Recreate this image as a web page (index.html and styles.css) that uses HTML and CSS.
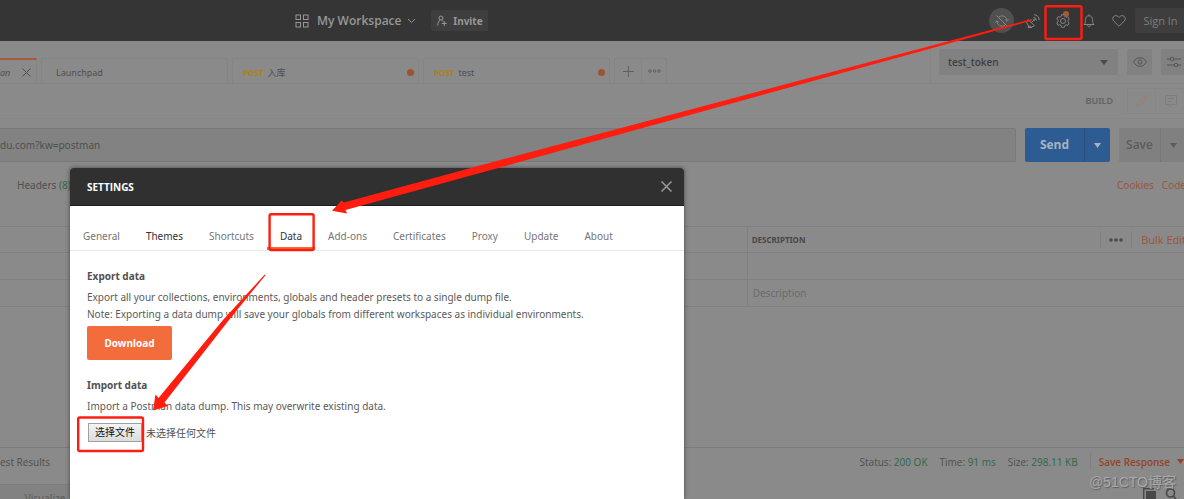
FILE: index.html
```html
<!DOCTYPE html>
<html lang="en">
<head>
<meta charset="utf-8">
<meta name="viewport" content="width=device-width, initial-scale=1">
<title>Settings</title>
<link rel="stylesheet" href="styles.css">
</head>
<body>
<div class="app">
  <header class="topbar">
    <button class="workspace" type="button">
      <svg width="14" height="14" viewBox="0 0 14 14" fill="none" stroke="currentColor"><rect x="1" y="1" width="4.5" height="4.5"/><rect x="8.5" y="1" width="4.5" height="4.5"/><rect x="1" y="8.5" width="4.5" height="4.5"/><rect x="8.5" y="8.5" width="4.5" height="4.5"/></svg>
      <span>My Workspace</span>
      <svg width="9" height="6" viewBox="0 0 9 6" fill="none" stroke="currentColor"><path d="M1 1l3.5 3.5L8 1"/></svg>
    </button>
    <button class="invite" type="button">
      <svg width="10" height="12" viewBox="0 0 10 12" fill="none" stroke="currentColor"><circle cx="4" cy="3" r="2"/><path d="M3.2 5C1.600 6 .8 8 .8 10.500M5 5.200l1 1.300M7.200 6v5M4.700 8.500h5"/></svg>
      <span>Invite</span>
    </button>
    <div class="top-actions">
      <button class="sync" type="button" aria-label="Sync off">
        <svg width="14" height="14" viewBox="0 0 14 14" fill="none" stroke="currentColor"><path d="M4 2.800A5 5 0 0 1 12 7M10 11.200A5 5 0 0 1 2 7M1.500 1.500l11 11M.5 8.500L2 6.700l1.800 1.800M10.200 5.500L12 7.300l1.500-1.800"/></svg>
      </button>
      <button class="icon" type="button" aria-label="Capture">
        <svg width="14" height="14" viewBox="0 0 14 14" fill="none" stroke="currentColor"><path d="M2 5.500a4.500 4.500 0 0 0 6.500 6.200zM5.500 8.500L8 6M3 11.500L2 13.500h4M7.500 3.500a3 3 0 0 1 3 3M8 .8a5 5 0 0 1 5.200 5.200"/><circle cx="8.300" cy="5.700" r=".7"/></svg>
      </button>
      <button class="icon gear" type="button" aria-label="Settings">
        <svg width="14" height="14" viewBox="0 0 14 14" fill="none" stroke="currentColor" stroke-linejoin="round"><path d="M5.700.7h2.600l.5 1.700 1.400.8 1.700-.5 1.300 2.300L12 6.300v1.400l1.200 1.300-1.300 2.300-1.700-.5-1.400.8-.5 1.700H5.700l-.5-1.700-1.400-.8-1.700.5L.8 9 2 7.700V6.300L.8 5l1.300-2.300 1.700.5 1.400-.8z"/><circle cx="7" cy="7" r="2.500"/></svg>
        <i class="badge"></i>
      </button>
      <button class="icon bell" type="button" aria-label="Notifications">
        <svg width="12" height="14" viewBox="0 0 12 14" fill="none" stroke="currentColor"><path d="M1 10.500c1-1 1.500-2 1.500-5C2.500 3 4 1.800 6 1.800S9.500 3 9.500 5.500c0 3 .5 4 1.500 5zM6 .3v1.500M4.700 11c0 2.400 2.600 2.400 2.600 0"/></svg>
      </button>
      <button class="icon" type="button" aria-label="Favorites">
        <svg width="14" height="12" viewBox="0 0 14 12" fill="none" stroke="currentColor"><path d="M7 11.300L1.700 6C.3 4.500.5 2.300 2 1.200 3.600.1 5.800.5 7 2.500 8.200.5 10.400.1 12 1.200c1.500 1.100 1.700 3.300.3 4.800z"/></svg>
      </button>
      <button class="signin" type="button">Sign In</button>
    </div>
  </header>

  <div class="tabrow">
    <nav class="tabs">
      <div class="tab tab-active"><em>an</em>
        <svg width="9" height="9" viewBox="0 0 9 9" fill="none" stroke="currentColor"><path d="M.5.5l8 8M8.500.5l-8 8"/></svg></div>
      <div class="tab"><span>Launchpad</span></div>
      <div class="tab"><b>POST</b><span>入库</span><i class="unsaved"></i></div>
      <div class="tab"><b>POST</b><span>test</span><i class="unsaved"></i></div>
      <div class="tab-tools">
        <button type="button" aria-label="New tab"><svg width="11" height="11" viewBox="0 0 11 11" fill="none" stroke="currentColor"><path d="M5.500 0v11M0 5.500h11"/></svg></button>
        <button type="button" aria-label="Tab options"><svg width="13" height="4" viewBox="0 0 13 4" fill="none" stroke="currentColor"><circle cx="2" cy="2" r="1.300"/><circle cx="6.500" cy="2" r="1.300"/><circle cx="11" cy="2" r="1.300"/></svg></button>
      </div>
    </nav>
    <div class="env">
      <div class="env-pick">
        <select aria-label="Environment"><option>test_token</option></select>
        <svg class="caret" width="8" height="5" viewBox="0 0 8 5" fill="currentColor"><path d="M0 0h8L4 5z"/></svg>
      </div>
      <button class="tool" type="button" aria-label="Quick look"><svg width="14" height="10" viewBox="0 0 14 10" fill="none" stroke="currentColor"><path d="M.6 5C3.500-.7 10.500-.7 13.400 5 10.500 10.700 3.500 10.700.6 5z"/><circle cx="7" cy="5" r="2"/></svg></button>
      <button class="tool" type="button" aria-label="Manage"><svg width="14" height="12" viewBox="0 0 14 12" fill="none" stroke="currentColor"><path d="M0 3h3M7 3h7M0 9h7M11 9h3"/><circle cx="5" cy="3" r="1.800"/><circle cx="9" cy="9" r="1.800"/></svg></button>
    </div>
  </div>

  <div class="modes">
    <span class="build">BUILD</span>
    <button class="mode pencil" type="button" aria-label="Edit"><svg width="12" height="12" viewBox="0 0 12 12" fill="none" stroke="currentColor"><path d="M.8 11.200l.7-3L9.300.6l2.100 2.100L3.800 10.500zM7.800 2.200l2 2"/></svg></button>
    <button class="mode" type="button" aria-label="Comments"><svg width="12" height="12" viewBox="0 0 12 12" fill="none" stroke="currentColor"><path d="M.5.5h11v9H7l-2 2v-2H.5zM3 3.500h6M3 6.500h4"/></svg></button>
  </div>

  <div class="request">
    <input class="url" type="text" aria-label="Request URL" value="du.com?kw=postman">
    <div class="split send"><button type="button">Send</button><button type="button" aria-label="Send options"><svg width="7" height="5" viewBox="0 0 7 5" fill="currentColor"><path d="M0 0h7L3.500 5z"/></svg></button></div>
    <div class="split save"><button type="button">Save</button><button type="button" aria-label="Save options"><svg width="7" height="5" viewBox="0 0 7 5" fill="currentColor"><path d="M0 0h7L3.500 5z"/></svg></button></div>
  </div>

  <div class="sections">
    <span>Headers <span class="ok">(8)</span></span>
    <div class="links"><a href="#cookies">Cookies</a><a href="#code">Code</a></div>
  </div>

  <table class="params">
    <thead><tr><th class="key"></th><th>
      <div class="th-row"><span>DESCRIPTION</span>
        <div class="th-tools"><button class="more" type="button" aria-label="Columns"><svg width="14" height="4" viewBox="0 0 14 4" fill="currentColor"><circle cx="2" cy="2" r="1.800"/><circle cx="7" cy="2" r="1.800"/><circle cx="12" cy="2" r="1.800"/></svg></button><a href="#bulk">Bulk Edit</a></div>
      </div></th></tr></thead>
    <tbody><tr><td></td><td></td></tr><tr><td></td><td>Description</td></tr></tbody>
  </table>

  <section class="response">
    <div class="response-bar">
      <span>est Results</span>
      <div class="stats">
        <span>Status: <b>200 OK</b></span><span>Time: <b>91 ms</b></span><span>Size: <b>298.11 KB</b></span>
        <button class="save-response" type="button">Save Response <svg width="7" height="5" viewBox="0 0 7 5" fill="currentColor"><path d="M0 0h7L3.500 5z"/></svg></button>
      </div>
    </div>
    <div class="view-bar">
      <button class="visualize" type="button">Visualize</button>
      <div class="view-icons">
        <svg width="13" height="14" viewBox="0 0 13 14"><path d="M.7 11V.7H11" fill="none" stroke="currentColor" stroke-width="1.400"/><path d="M3 3h10v11H3z" fill="currentColor"/></svg>
        <svg width="12" height="13" viewBox="0 0 12 13" fill="none" stroke="currentColor" stroke-width="1.700"><circle cx="5.500" cy="5" r="4"/><path d="M8.300 8l3.200 4"/></svg>
      </div>
    </div>
  </section>
</div>

<div class="overlay">
  <div class="modal" role="dialog" aria-labelledby="modal-title">
    <div class="modal-head">
      <h1 id="modal-title">SETTINGS</h1>
      <button type="button" aria-label="Close"><svg width="11" height="11" viewBox="0 0 11 11" fill="none" stroke="currentColor" stroke-width="1.500"><path d="M.5.5l10 10M10.500.5l-10 10"/></svg></button>
    </div>
    <nav class="modal-tabs">
      <a href="#general">General</a><a class="dark" href="#themes">Themes</a><a href="#shortcuts">Shortcuts</a><a class="dark current" href="#data">Data</a><a href="#addons">Add-ons</a><a href="#certificates">Certificates</a><a href="#proxy">Proxy</a><a href="#update">Update</a><a href="#about">About</a>
    </nav>
    <div class="modal-body">
      <h2>Export data</h2>
      <p>Export all your collections, environments, globals and header presets to a single dump file.<br>Note: Exporting a data dump will save your globals from different workspaces as individual environments.</p>
      <button class="download" type="button">Download</button>
      <h2>Import data</h2>
      <p>Import a Postman data dump. This may overwrite existing data.</p>
      <div class="file">
        <input id="dump" type="file">
        <label for="dump">选择文件</label><span>未选择任何文件</span>
      </div>
    </div>
  </div>
</div>

<svg class="marks" width="1184" height="499" viewBox="0 0 1184 499" fill="#ff1d10">
  <path d="M1032 19L502 159.500 344 202.500 341.500 200.500 332 210.800 347 213.500 345.500 210 525 160.500 920 51.500 1032 20.500z"/>
  <path d="M264.700 274.500L223 320 158.500 398 155.500 394.500 153 410.500 168 406 164.500 402.500 229 320 265.500 275.200z"/>
  <g fill="none" stroke="#ff1d10" stroke-width="2.400"><rect x="1045.500" y="6.200" width="36" height="32.800" rx="1.500"/><rect x="269.600" y="214.200" width="44" height="35.800" rx="1.500"/><rect x="78.200" y="417.500" width="64.800" height="33.500" rx="1.500"/></g>
</svg>
<div class="watermark">@51CTO博客</div>
</body>
</html>
```
FILE: styles.css
```css
* { box-sizing: border-box; }
html, body { margin: 0; height: 100%; overflow: hidden; }
body {
  position: relative;
  background: #8a8a8a;
  color: #4f4f4f;
  font: 10px/16px "Noto Sans", "Noto Sans CJK SC", sans-serif;
}
button, input, select { font: inherit; color: inherit; border: 0; margin: 0; padding: 0; background: none; }
button { display: flex; align-items: center; justify-content: center; flex: none; }
a { text-decoration: none; color: inherit; }
svg { display: block; flex: none; }
h1, h2, p { margin: 0; }

.app { min-height: 100%; display: flex; flex-direction: column; margin-right: -2px; }

.topbar { display: flex; align-items: center; height: 41px; padding-left: 295px; background: #353535; color: #979797; flex: none; }
.workspace { gap: 8px; font: 600 12px/16px "Open Sans", sans-serif; }
.workspace svg:last-child { margin-left: -2px; }
.invite { gap: 6px; margin-left: 15px; height: 21px; width: 57px; border-radius: 2px; background: #3e3e3e; font-weight: 700; }
.top-actions { display: flex; align-items: center; margin-left: auto; color: #858585; }
.sync { width: 25px; height: 25px; border-radius: 50%; background: #505050; margin-right: 4px; }
.icon { width: 30px; height: 25px; position: relative; }
.icon.bell { width: 22px; margin-right: 4px; }
.badge { position: absolute; right: 9px; top: 3px; width: 6px; height: 6px; border-radius: 50%; background: #a35a3d; }
.signin { width: 51px; height: 25px; margin-left: 1px; background: #3e3e3e; border-radius: 2px; color: #7d7d7d; font: 11px/16px "Open Sans", sans-serif; }

.tabrow { display: flex; height: 43px; border-bottom: 1px solid #848484; flex: none; }
.tabs { display: flex; align-items: flex-end; flex: 1; gap: 4px; padding-top: 17px; min-width: 0; }
.tab { display: flex; align-items: center; gap: 4px; width: 187px; height: 25px; border: 1px solid #848484; border-bottom: 0; padding: 3px 4px 0 10px; font-size: 9px; }
.tab span:first-child { padding-left: 4px; }
.tab b { color: #ac8116; font: 700 8px/16px "Open Sans", sans-serif; }
.tab-active { width: 37px; padding: 2px 5px 0 0; border-left: 0; border-top: 2px solid #a35a3d; justify-content: space-between; }
.unsaved { width: 7px; height: 7px; border-radius: 50%; background: #9c5334; margin-left: auto; }
.tab-tools { display: flex; height: 25px; border: 1px solid #848484; border-bottom: 0; color: #606060; }
.tab-tools button { width: 26px; }
.tab-tools button + button { width: 25px; border-left: 1px solid #848484; }
.env { display: flex; align-items: center; gap: 9px; width: 256px; padding-left: 8px; border-left: 1px solid #848484; flex: none; }
.env-pick { position: relative; flex: 1; }
.env-pick select { display: block; appearance: none; width: 100%; height: 26px; padding: 0 9px; border-radius: 2px; background: #818181; color: #3f3f3f; font: 10px/16px "Open Sans", sans-serif; font-weight: 600; }
.caret { position: absolute; right: 10px; top: 11px; pointer-events: none; color: #4b4b4b; }
.tool { width: 25px; height: 26px; border-radius: 2px; background: #818181; color: #555; }

.modes { display: flex; align-items: center; justify-content: flex-end; height: 35px; flex: none; border-bottom: 1px solid #878787; }
.build { color: #626262; font-size: 9px; font-weight: 600; margin-right: 14px; }
.mode { width: 29px; height: 26px; border: 1px solid #868686; color: #7d7d7d; }
.mode.pencil { color: #a07c70; }
.mode + .mode { width: 30px; border-left: 0; }

.request { display: flex; gap: 9px; padding-top: 9px; flex: none; }
.url { flex: 1; min-width: 0; height: 34px; background: #828282; border: 1px solid #797979; border-left: 0; border-radius: 0 2px 2px 0; }
.split { display: flex; height: 34px; font: 700 12px/16px "Open Sans", sans-serif; border-radius: 2px; overflow: hidden; }
.send { background: #2c5c91; color: #a7b3c1; }
.send button { width: 59px; }
.send button + button { width: 26px; border-left: 1px solid #26507f; }
.save { background: #808080; color: #5c5c5c; font-weight: 600; }
.save button { width: 41px; }
.save button + button { width: 26px; border-left: 1px solid #767676; }

.sections { display: flex; justify-content: space-between; align-items: center; padding: 0 0 0 17px; height: 46px; margin-bottom: 18px; flex: none; }
.ok { color: #2f6845; }
.links { display: flex; gap: 8px; }
.links a, .th-tools a { color: #9a5540; }

.params { width: 100%; border-collapse: collapse; table-layout: fixed; color: #6b6b6b; }
.params th, .params td { height: 26px; padding: 0 0 0 5px; border: 1px solid #808080; border-width: 1px 0; text-align: left; font-weight: 400; }
.params tr > :last-child { border-left-width: 1px; }
.params .key { width: 63%; }
.params tbody tr { height: 27px; }
.params th { padding-left: 4px; }
.th-row { display: flex; justify-content: space-between; align-items: center; }
.th-row > span { color: #474747; font: 700 8px/16px "Noto Sans", sans-serif; }
.th-tools { display: flex; align-items: center; }
.th-tools a { font: 11px/16px "Open Sans", sans-serif; }
.more { width: 32px; height: 17px; border: 1px solid #808080; border-width: 0 1px; margin-right: 9px; color: #4b4b4b; }

.response { margin-top: auto; flex: none; border-top: 1px solid #7b7b7b; }
.response-bar { display: flex; justify-content: space-between; align-items: center; height: 27px; font: 10px/16px "Open Sans", sans-serif; }
.stats { display: flex; align-items: center; gap: 12px; }
.stats b { color: #2f6845; font-weight: 400; }
.save-response { gap: 7px; height: 17px; padding: 0 2px 0 8px; border-left: 1px solid #808080; color: #944527; font: 600 10px/16px "Open Sans", sans-serif; }
.view-bar { display: flex; justify-content: space-between; align-items: flex-start; height: 24px; overflow: hidden; padding-top: 9px; }
.visualize { width: 90px; height: 26px; background: #828282; color: #5c5c5c; border-top: 1px solid #7d7d7d; }
.view-icons { display: flex; gap: 9px; padding: 4px 9px 0 0; color: #484848; }

.overlay { position: absolute; inset: 0; padding: 168px 0 0 70px; display: flex; }
.modal { width: 100%; max-width: 614px; background: #fff; border-radius: 3px 3px 0 0; box-shadow: 0 0 4px rgba(0, 0, 0, .5); color: #505050; }
.modal-head { display: flex; align-items: center; justify-content: space-between; height: 38px; padding: 0 12px 0 17px; background: #303030; border-bottom: 1px solid #1d1d1d; border-radius: 3px 3px 0 0; color: #fff; }
.modal-head h1 { font: 700 10px/16px "Open Sans", sans-serif; }
.modal-head button { color: #999; }
.modal-tabs { display: flex; height: 45px; border-bottom: 1px solid #e9e9e9; color: #757575; }
.modal-tabs a { padding: 22px 13px 0; }
.modal-tabs .dark { color: #333; }
.modal-tabs .current { border-bottom: 3px solid #f26b3a; }
.modal-body { padding: 17px; }
.modal-body h2 { font-size: 10px; line-height: 17px; font-weight: 700; margin-bottom: 4px; }
.modal-body p { line-height: 17px; color: #5a5a5a; }
.download { width: 85px; height: 34px; margin: 3px 0 17px; border-radius: 2px; background: #f36c3b; color: #fff; font-weight: 700; }
.file { display: flex; align-items: center; gap: 4px; margin-top: 8px; padding-left: 1px; font-family: "Noto Sans CJK SC", sans-serif; }
.file input { position: absolute; width: 1px; height: 1px; opacity: 0; }
.file label { height: 19px; padding: 0 6px; border: 1px solid #a0a0a0; background: linear-gradient(#f4f4f4, #dcdcdc); color: #111; }

.marks { position: absolute; left: 0; top: 0; pointer-events: none; }
.watermark { position: absolute; right: 8px; bottom: 7px; font: 14px/20px "Liberation Sans", "Noto Sans CJK SC", sans-serif; color: #aaa; text-shadow: 1px 1px 1px #5d5d5d; }
```
